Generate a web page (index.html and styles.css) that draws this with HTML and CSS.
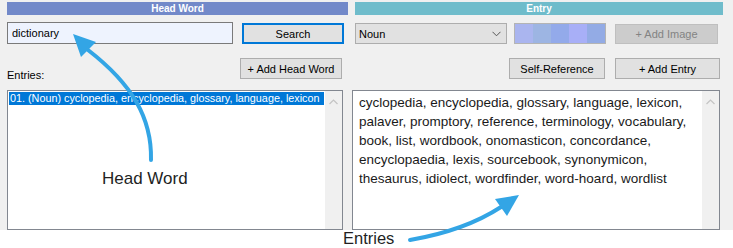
FILE: index.html
```html
<!DOCTYPE html>
<html lang="en">
<head>
    <meta charset="UTF-8">
    <meta name="viewport" content="width=device-width, initial-scale=1.0">
    <title>Dictionary Editor</title>
    <link rel="stylesheet" href="styles.css">
</head>
<body>
    <div class="app">
        <section class="pane pane-head">
            <div class="band band-head">Head Word</div>
            <div class="row row-top">
                <input class="word" type="text" value="dictionary">
                <button class="btn btn-search">Search</button>
            </div>
            <div class="row row-mid">
                <span class="caption">Entries:</span>
                <button class="btn btn-add-head">+ Add Head Word</button>
            </div>
            <div class="listbox">
                <div class="list-items">
                    <div class="item selected">01. (Noun) cyclopedia, encyclopedia, glossary, language, lexicon</div>
                </div>
                <div class="scrollbar">
                    <svg width="17" height="17" viewBox="0 0 17 17"><polyline points="4.5,12 8.5,8 12.5,12" fill="none" stroke="#c4c4c4" stroke-width="1.2"/></svg>
                </div>
            </div>
        </section>

        <section class="pane pane-entry">
            <div class="band band-entry">Entry</div>
            <div class="row row-top-entry">
                <div class="select">
                    <span>Noun</span>
                    <svg width="9" height="6" viewBox="0 0 9 6"><polyline points="0.5,0.8 4.5,4.8 8.5,0.8" fill="none" stroke="#555" stroke-width="1"/></svg>
                </div>
                <div class="swatch">
                    <span class="chip" style="background:#aab5ef"></span>
                    <span class="chip" style="background:#9db5e3"></span>
                    <span class="chip" style="background:#93aaea"></span>
                    <span class="chip" style="background:#a8aff7"></span>
                    <span class="chip" style="background:#93abe5"></span>
                </div>
                <button class="btn btn-image" disabled>+ Add Image</button>
            </div>
            <div class="row row-mid-entry">
                <button class="btn btn-self">Self-Reference</button>
                <button class="btn btn-add-entry">+ Add Entry</button>
            </div>
            <div class="entry-box">
                <div class="entry-text">
                    cyclopedia, encyclopedia, glossary, language, lexicon,<br>
                    palaver, promptory, reference, terminology, vocabulary,<br>
                    book, list, wordbook, onomasticon, concordance,<br>
                    encyclopaedia, lexis, sourcebook, synonymicon,<br>
                    thesaurus, idiolect, wordfinder, word-hoard, wordlist
                </div>
                <div class="scrollbar scrollbar-entry">
                    <svg width="17" height="17" viewBox="0 0 17 17"><polyline points="4.5,12 8.5,8 12.5,12" fill="none" stroke="#c4c4c4" stroke-width="1.2"/></svg>
                </div>
            </div>
        </section>
    </div>

    <div class="notes">
        <svg class="arrows" width="733" height="248" viewBox="0 0 733 248">
            <path d="M151,160 C152,118 132,84 88,50" fill="none" stroke="#33a5e5" stroke-width="4" stroke-linecap="round"/>
            <polygon points="73,34 96,42 81,57" fill="#33a5e5"/>
            <path d="M410,240 C445,234 475,224 501,207" fill="none" stroke="#33a5e5" stroke-width="4" stroke-linecap="round"/>
            <polygon points="519,195 507,216 495,199" fill="#33a5e5"/>
        </svg>
        <span class="note note-head">Head Word</span>
        <span class="note note-entries">Entries</span>
    </div>
</body>
</html>
```

FILE: styles.css
```css
* {
    box-sizing: border-box;
}

body {
    margin: 0;
    width: 733px;
    height: 248px;
    position: relative;
    background-color: #ffffff;
    font-family: 'Liberation Sans', Arial, sans-serif;
    font-size: 11px;
    color: #000;
    overflow: hidden;
}

.app {
    display: flex;
    height: 230px;
    padding: 2px 0 0 7px;
    background-color: #f0f0f0;
    overflow: hidden;
}

.pane {
    display: flex;
    flex-direction: column;
}

.pane-head {
    width: 341px;
}

.pane-entry {
    width: 371px;
    margin-left: 4px;
}

.band {
    height: 13px;
    line-height: 13px;
    color: #ffffff;
    font-size: 10px;
    font-weight: bold;
    text-align: center;
}

.band-head {
    background-color: #7289c9;
}

.band-entry {
    margin-left: 3px;
    background-color: #6fbccb;
}

.row {
    display: flex;
    align-items: flex-start;
    flex-shrink: 0;
}

.row-top {
    margin-top: 7px;
    height: 22px;
}

.word {
    width: 226px;
    height: 22px;
    padding: 0 4px;
    border: 1px solid #7a7a7a;
    background-color: #eef3fe;
    font-family: inherit;
    font-size: 11px;
    color: #000;
    outline: none;
}

.btn {
    height: 21px;
    padding: 0;
    border: 1px solid #adadad;
    background-color: #e1e1e1;
    font-family: inherit;
    font-size: 11px;
    color: #000;
}

.btn-search {
    width: 102px;
    margin: 1px 0 0 9px;
    border: 2px solid #0078d7;
}

.row-mid {
    margin-top: 14px;
    height: 21px;
}

.caption {
    margin-top: 11px;
    line-height: 13px;
}

.btn-add-head {
    width: 102px;
    margin-left: auto;
    margin-right: 6px;
}

.listbox {
    display: flex;
    flex: 1;
    width: 336px;
    margin-top: 11px;
    border: 1px solid #828790;
    background-color: #ffffff;
}

.list-items {
    flex: 1;
    padding: 1px;
}

.item {
    height: 13px;
    line-height: 13px;
    padding-left: 1px;
    font-size: 10.8px;
    white-space: nowrap;
    overflow: hidden;
}

.item.selected {
    background-color: #0078d7;
    color: #ffffff;
}

.scrollbar {
    width: 17px;
    background-color: #f0f0f0;
}

.scrollbar svg {
    display: block;
    margin-top: 1px;
}

.row-top-entry {
    margin-top: 8px;
    height: 21px;
}

.select {
    display: flex;
    align-items: center;
    justify-content: space-between;
    width: 152px;
    height: 21px;
    margin-left: 3px;
    padding: 0 5px 0 3px;
    border: 1px solid #adadad;
    background-color: #e1e1e1;
}

.swatch {
    display: flex;
    width: 92px;
    height: 21px;
    margin-left: 7px;
    border: 1px solid #b4b4b4;
}

.chip {
    flex: 1;
}

.btn-image {
    width: 103px;
    height: 20px;
    margin: 1px 0 0 9px;
    border-color: #bfbfbf;
    background-color: #cccccc;
    color: #838383;
}

.row-mid-entry {
    margin-top: 14px;
    height: 21px;
}

.btn-self {
    width: 96px;
    margin-left: 157px;
}

.btn-add-entry {
    width: 105px;
    margin-left: 10px;
}

.entry-box {
    display: flex;
    flex: 1;
    width: 368px;
    margin-top: 11px;
    border: 1px solid #828790;
    background-color: #ffffff;
}

.entry-text {
    flex: 1;
    padding: 2px 6px;
    font-size: 13.5px;
    line-height: 19px;
    color: #1a1a1a;
    white-space: nowrap;
}

.notes {
    position: absolute;
    top: 0;
    left: 0;
    width: 733px;
    height: 248px;
    pointer-events: none;
}

.arrows {
    position: absolute;
    top: 0;
    left: 0;
}

.note {
    position: absolute;
    font-size: 17px;
    line-height: 15px;
    color: #231f1f;
}

.note-head {
    left: 102px;
    top: 171px;
}

.note-entries {
    left: 343px;
    top: 231px;
    font-size: 16.5px;
}
```
